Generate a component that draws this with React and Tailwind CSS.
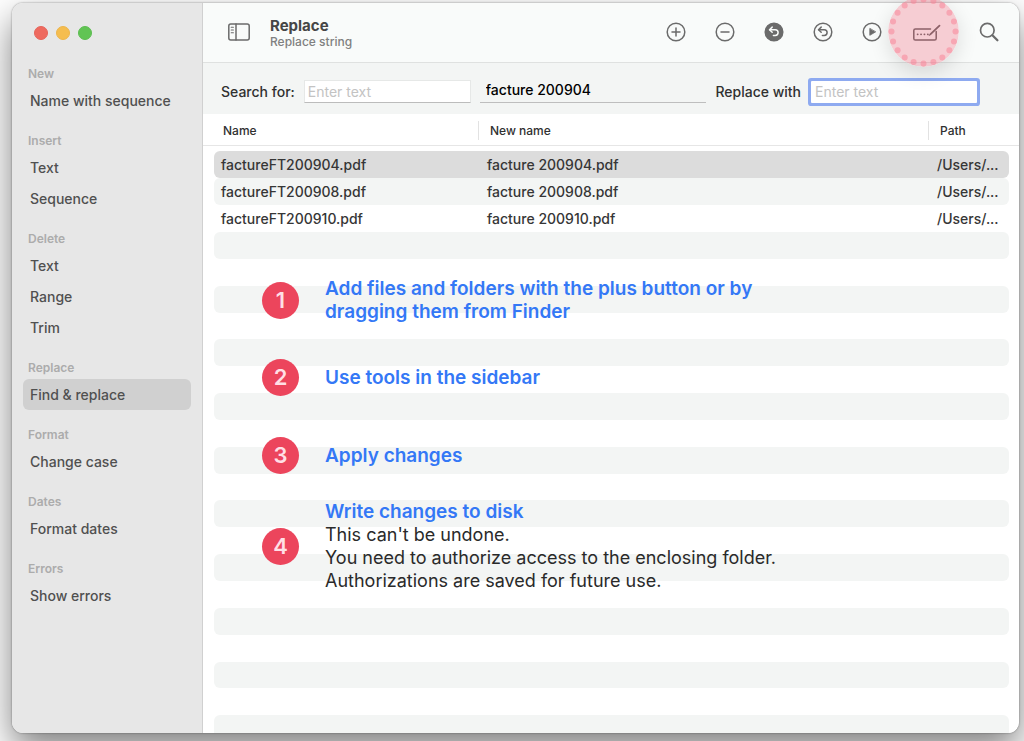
import { useState } from 'react'
import clsx from 'clsx'

const groups = [
  { title: 'New', items: ['Name with sequence'] },
  { title: 'Insert', items: ['Text', 'Sequence'] },
  { title: 'Delete', items: ['Text', 'Range', 'Trim'] },
  { title: 'Replace', items: ['Find & replace'] },
  { title: 'Format', items: ['Change case'] },
  { title: 'Dates', items: ['Format dates'] },
  { title: 'Errors', items: ['Show errors'] },
]

const files = [
  { name: 'factureFT200904.pdf', newName: 'facture 200904.pdf', path: '/Users/...' },
  { name: 'factureFT200908.pdf', newName: 'facture 200908.pdf', path: '/Users/...' },
  { name: 'factureFT200910.pdf', newName: 'facture 200910.pdf', path: '/Users/...' },
]

const steps = [
  { title: 'Add files and folders with the plus button or by dragging them from Finder', gap: 'mt-0' },
  { title: 'Use tools in the sidebar', gap: 'mt-9' },
  { title: 'Apply changes', gap: 'mt-[41px]' },
  {
    title: 'Write changes to disk',
    gap: 'mt-[26px]',
    lines: [
      "This can't be undone.",
      'You need to authorize access to the enclosing folder.',
      'Authorizations are saved for future use.',
    ],
  },
]

const cols = 'grid grid-cols-[264px_minmax(0,1fr)_81px] ml-[11px] mr-[10px]'

function Svg({ size = 22, children }) {
  return (
    <svg width={size} height={size} viewBox={`0 0 ${size} ${size}`} fill="none" stroke="currentColor" strokeWidth="1.5" strokeLinecap="round" strokeLinejoin="round">
      {children}
    </svg>
  )
}

const undoArrow = (
  <>
    <path d="M9.2 6.1 6.5 8.7l2.7 2.6" />
    <path d="M6.8 8.7h5.4a2.9 2.9 0 0 1 0 5.8h-1.8" />
  </>
)

const tools = [
  { label: 'Add', icon: <><circle cx="11" cy="11" r="8.8" /><path d="M11 7v8M7 11h8" /></> },
  { label: 'Remove', icon: <><circle cx="11" cy="11" r="8.8" /><path d="M7 11h8" /></> },
  { label: 'Undo all', icon: <><circle cx="11" cy="11" r="8.8" fill="currentColor" /><g stroke="#f9fbfa">{undoArrow}</g></> },
  { label: 'Undo', icon: <><circle cx="11" cy="11" r="8.8" />{undoArrow}</> },
  { label: 'Apply', icon: <><circle cx="11" cy="11" r="8.8" /><path d="M8.8 7.7v6.6l5.6-3.3z" fill="currentColor" strokeWidth="0.8" /></> },
]

// Pink marker that sits over the write button
function Highlight() {
  const dots = Array.from({ length: 20 }, (_, i) => {
    const a = (i * Math.PI) / 10
    return <circle key={i} cx={35.5 + 32 * Math.cos(a)} cy={35.5 + 32 * Math.sin(a)} r="3" fill="#f77f93" fillOpacity="0.5" />
  })
  return (
    <svg width="71" height="71" viewBox="0 0 71 71" className="absolute -top-[21px] -left-5 pointer-events-none rounded-full shadow-[0_6px_20px_rgba(0,0,0,0.12)]">
      <circle cx="35.5" cy="35.5" r="35.5" fill="#ee4560" fillOpacity="0.25" />
      {dots}
    </svg>
  )
}

function Sidebar({ active, onSelect }) {
  return (
    <aside className="w-[191px] shrink-0 bg-[#e7e7e7] border-r border-[#d0d0d0] rounded-l-[11px]">
      <div className="flex gap-2 pl-[22px] pt-[23px] pb-[22px]">
        <button aria-label="Close" className="size-[14px] rounded-full bg-[#ee6a5f] border border-[#e6645a]" />
        <button aria-label="Minimize" className="size-[14px] rounded-full bg-[#f5bd4f] border border-[#edb54b]" />
        <button aria-label="Zoom" className="size-[14px] rounded-full bg-[#61c454] border border-[#5cbd50]" />
      </div>
      <nav>
        {groups.map((g) => (
          <section key={g.title} className="mb-[13px]">
            <h2 className="pl-4 text-[12px] leading-[23px] font-semibold text-[#acacac]">{g.title}</h2>
            {g.items.map((item) => {
              const id = `${g.title}/${item}`
              return (
                <button
                  key={id}
                  onClick={() => onSelect(id)}
                  className={clsx(
                    'block w-[168px] h-[31px] ml-[11px] pl-[7px] rounded-md text-left text-[14px] font-medium text-[#505050]',
                    active === id && 'bg-[#d0d0d0]'
                  )}
                >
                  {item}
                </button>
              )
            })}
          </section>
        ))}
      </nav>
    </aside>
  )
}

function Toolbar() {
  return (
    <header className="flex items-center h-[60px] pl-6 pr-[19px] pb-[2px] bg-[#f9fbfa] border-b border-[#dfe1e0] rounded-tr-[11px] text-[#6b6b6b]">
      <button aria-label="Toggle sidebar">
        <Svg size={24}>
          <rect x="1.8" y="4" width="20.4" height="16" rx="2" />
          <path d="M9 4v16" />
          <path d="M4.2 7.3h2.2M4.2 10h2.2M4.2 12.7h2.2" strokeWidth="1.1" />
        </Svg>
      </button>
      <div className="ml-[19px] pt-1">
        <h1 className="text-[15px] leading-[17px] font-bold text-[#464646]">Replace</h1>
        <p className="text-[12px] leading-4 font-medium text-[#808080]">Replace string</p>
      </div>
      <div className="ml-auto flex items-center">
        <div className="flex gap-[27px]">
          {tools.map((t) => (
            <button key={t.label} aria-label={t.label}><Svg>{t.icon}</Svg></button>
          ))}
        </div>
        <button aria-label="Write changes" className="relative z-10 ml-[25px]">
          <svg width="36" height="30" viewBox="0 0 36 30" fill="none" stroke="currentColor" strokeWidth="1.5" strokeLinecap="round" strokeLinejoin="round">
            <path d="M22.5 12H7.4a1.6 1.6 0 0 0-1.6 1.6v7.8A1.6 1.6 0 0 0 7.4 23h19.2a1.6 1.6 0 0 0 1.6-1.6v-6.9" />
            <path d="M9.6 17.3h.1M13 17.3h.1M16.4 17.3h.1M19.8 17.3h.1" strokeWidth="1.8" />
            <path d="m22.3 17.3 9.2-8.6" strokeWidth="1.8" />
            <path d="m21.2 18.6 1.2-1.3" strokeWidth="1" />
          </svg>
          <Highlight />
        </button>
        <button aria-label="Search" className="ml-[34px]">
          <Svg>
            <circle cx="9.3" cy="9.2" r="6.8" strokeWidth="1.7" />
            <path d="m14.4 14.3 5 4.9" strokeWidth="2.3" />
          </Svg>
        </button>
      </div>
    </header>
  )
}

function FilterBar() {
  const [search, setSearch] = useState('')
  const [replace, setReplace] = useState('')

  return (
    <div className="flex items-center h-[51px] pt-[6px] pl-[18px] pr-[42px] bg-[#f3f5f4] text-[14px] text-[#303030]">
      <label htmlFor="search" className="shrink-0 font-medium">Search for:</label>
      <input
        id="search" placeholder="Enter text" value={search}
        onChange={(e) => setSearch(e.target.value)}
        className="ml-[9px] w-[167px] h-[23px] px-[3px] bg-white border border-[#e6e8e7] border-b-[#bcbcbc] placeholder:text-[#c3c3c3] outline-none"
      />
      <input
        aria-label="Preview" readOnly value="facture 200904"
        className="ml-[9px] flex-1 min-w-0 h-[23px] px-1.5 pb-1 border-b border-[#bebebe] font-medium text-black outline-none"
      />
      <label htmlFor="replace" className="shrink-0 ml-[9px] font-medium">Replace with</label>
      <input
        id="replace" placeholder="Enter text" value={replace}
        onChange={(e) => setReplace(e.target.value)}
        className="ml-[10px] w-[166px] h-[22px] px-1 bg-white rounded-[1px] ring-3 ring-[#8eaaf0] placeholder:text-[#c3c3c3] outline-none"
      />
    </div>
  )
}

function FileTable() {
  return (
    <table className="block">
      <thead className="block h-8 border-b border-[#e6e6e6] text-[12px] text-[#303030]">
        <tr className={cols}>
          <th className="pl-[9px] text-left font-medium leading-[33px]">Name</th>
          <th className="my-[7px] pl-[11px] border-l border-[#e2e2e2] text-left font-medium leading-[19px]">New name</th>
          <th className="my-[7px] pl-[11px] border-l border-[#e2e2e2] text-left font-medium leading-[19px]">Path</th>
        </tr>
      </thead>
      <tbody className="block pt-[5px] text-[14px] leading-[27px] font-medium text-[#363636]">
        {files.map((f, i) => (
          <tr key={f.name} className={clsx(cols, 'rounded-md', i === 0 && 'bg-[#dcdcdc]', i === 1 && 'bg-[#f3f5f4]')}>
            <td className="pl-[7px]">{f.name}</td>
            <td className="pl-[9px]">{f.newName}</td>
            <td className="pl-[9px]">{f.path}</td>
          </tr>
        ))}
      </tbody>
    </table>
  )
}

function Steps() {
  return (
    <ol className="relative pt-[45px] pl-[59px] pr-6 text-[18px] leading-[23px] text-[#2a2a2a]">
      {steps.map((s, i) => (
        <li key={s.title} className={clsx('flex items-center gap-[26px]', s.gap)}>
          <span className="flex items-center justify-center size-[37px] shrink-0 rounded-full bg-[#ec455c] text-[22px] font-semibold text-[#ffdfe5]">
            {i + 1}
          </span>
          <div>
            <h3 className="max-w-[440px] text-[19px] font-semibold text-[#3478f6]">{s.title}</h3>
            {s.lines?.map((line) => <p key={line}>{line}</p>)}
          </div>
        </li>
      ))}
    </ol>
  )
}

export default function App() {
  const [active, setActive] = useState('Replace/Find & replace')

  return (
    <div className="flex h-screen overflow-hidden pt-[3px] pl-3 pr-[5px] pb-2 bg-white font-['Inter','Liberation_Sans',sans-serif]">
      <div className="flex flex-1 rounded-[11px] shadow-[0_0_2px_rgba(0,0,0,0.45),0_16px_36px_rgba(0,0,0,0.5)]">
        <Sidebar active={active} onSelect={setActive} />
        <main className="flex flex-col flex-1 min-w-0 bg-white rounded-r-[11px]">
          <Toolbar />
          <FilterBar />
          <FileTable />
          <div className="relative flex-1 overflow-hidden rounded-br-[11px]">
            {/* Empty striped rows behind the help text */}
            <div className="absolute left-[11px] right-[10px] top-0 -bottom-[9px] flex flex-col">
              {Array.from({ length: 19 }, (_, i) => (
                <div key={i} className="flex-1 rounded-md even:bg-white odd:bg-[#f3f5f4]" />
              ))}
            </div>
            <Steps />
          </div>
        </main>
      </div>
    </div>
  )
}
